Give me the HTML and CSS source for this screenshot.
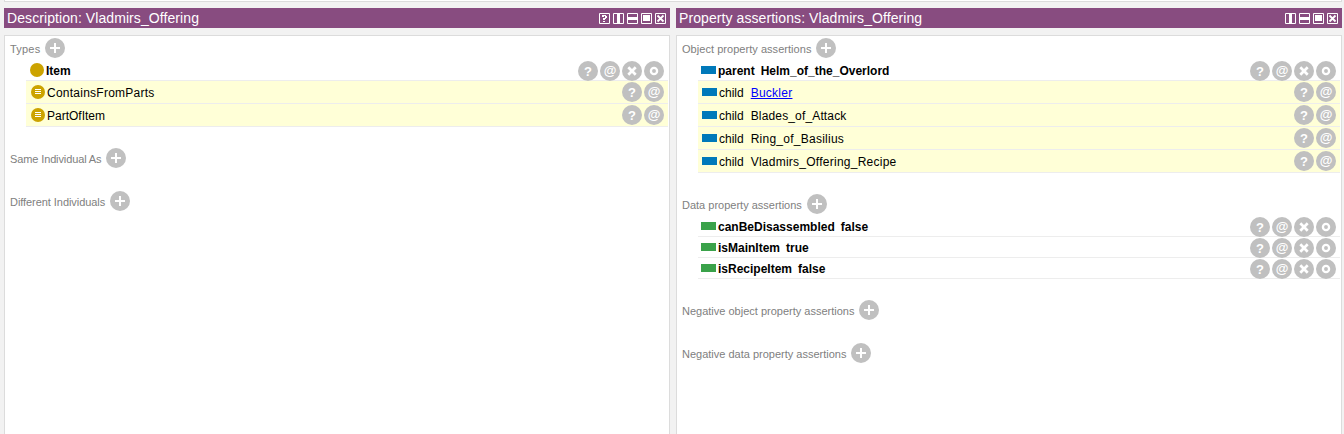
FILE: index.html
```
<!DOCTYPE html>
<html lang="en">
<head>
<meta charset="utf-8">
<title>Vladmirs_Offering</title>
<link rel="stylesheet" href="styles.css">
</head>
<body>
<svg width="0" height="0" class="defs">
  <symbol id="add" viewBox="0 0 20 20"><circle cx="10" cy="10" r="10" fill="#c0c0c0"/><path d="M5 10h10M10 5v10" stroke="#fff" stroke-width="2"/></symbol>
  <symbol id="del" viewBox="0 0 20 20"><circle cx="10" cy="10" r="10" fill="#c0c0c0"/><path d="M6.3 6.3l7.4 7.4M13.7 6.3l-7.4 7.4" stroke="#fff" stroke-width="2.7"/></symbol>
  <symbol id="edit" viewBox="0 0 20 20"><circle cx="10" cy="10" r="10" fill="#c0c0c0"/><circle cx="10" cy="10" r="3.1" fill="none" stroke="#fff" stroke-width="2.3"/></symbol>
  <symbol id="equiv" viewBox="0 0 14 14"><circle cx="7" cy="7" r="7" fill="#cca300"/><path d="M4 4.5h6M4 6.5h6M4 8.5h6" stroke="#fff" stroke-width="1"/></symbol>
  <symbol id="w-cols" viewBox="0 0 11 11"><path d="M.5.5h10v10H.5z" fill="none" stroke="#fff"/><path d="M4 0h3v11H4z" fill="#fff"/></symbol>
  <symbol id="w-rows" viewBox="0 0 11 11"><path d="M.5.5h10v10H.5z" fill="none" stroke="#fff"/><path d="M0 4h11v3H0z" fill="#fff"/></symbol>
  <symbol id="w-float" viewBox="0 0 11 11"><path d="M.5.5h10v10H.5z" fill="none" stroke="#fff"/><path d="M2 2h7v6H2z" fill="#fff"/></symbol>
  <symbol id="w-close" viewBox="0 0 11 11"><path d="M.5.5h10v10H.5z" fill="none" stroke="#fff"/><path d="M2.5 2.5l6 6M8.5 2.5l-6 6" stroke="#fff" stroke-width="1.8"/></symbol>
  <symbol id="w-help" viewBox="0 0 11 11"><path d="M.5.5h10v10H.5z" fill="none" stroke="#fff"/><path d="M3 2h4v1h1v2H7v1H6v1H4V5h2V3H5v1H3zM4 8h2v1H4z" fill="#fff"/></symbol>
</svg>
<div class="strip"></div>
<main class="panels">
  <section class="panel">
    <header class="bar"><h1 class="title">Description: Vladmirs_Offering</h1>
      <span class="tools"><svg><use href="#w-help"/></svg><svg><use href="#w-cols"/></svg><svg><use href="#w-rows"/></svg><svg><use href="#w-float"/></svg><svg><use href="#w-close"/></svg></span></header>
    <div class="body classes">
      <div class="group">
        <div class="head"><span class="w-types">Types</span><svg><use href="#add"/></svg></div>
        <div class="row"><i class="class-dot"></i><b class="w-item">Item</b><span class="acts"><i class="act">?</i><i class="act at">@</i><svg><use href="#del"/></svg><svg><use href="#edit"/></svg></span></div>
        <div class="row inferred"><svg class="equiv"><use href="#equiv"/></svg><span class="wide">ContainsFromParts</span><span class="acts"><i class="act">?</i><i class="act at">@</i></span></div>
        <div class="row inferred"><svg class="equiv"><use href="#equiv"/></svg><span>PartOfItem</span><span class="acts"><i class="act">?</i><i class="act at">@</i></span></div>
      </div>
      <div class="group"><div class="head"><span class="w-same">Same Individual As</span><svg><use href="#add"/></svg></div></div>
      <div class="group"><div class="head"><span class="w-diff">Different Individuals</span><svg><use href="#add"/></svg></div></div>
    </div>
  </section>
  <section class="panel">
    <header class="bar"><h1 class="title">Property assertions: Vladmirs_Offering</h1>
      <span class="tools"><svg><use href="#w-cols"/></svg><svg><use href="#w-rows"/></svg><svg><use href="#w-float"/></svg><svg><use href="#w-close"/></svg></span></header>
    <div class="body">
      <div class="group">
        <div class="head"><span class="w-object">Object property assertions</span><svg><use href="#add"/></svg></div>
        <div class="row"><i class="prop"></i><b class="key">parent</b><b>Helm_of_the_Overlord</b><span class="acts"><i class="act">?</i><i class="act at">@</i><svg><use href="#del"/></svg><svg><use href="#edit"/></svg></span></div>
        <div class="row inferred"><i class="prop"></i><span class="key">child</span><a class="link wide">Buckler</a><span class="acts"><i class="act">?</i><i class="act at">@</i></span></div>
        <div class="row inferred"><i class="prop"></i><span class="key">child</span><span class="medium">Blades_of_Attack</span><span class="acts"><i class="act">?</i><i class="act at">@</i></span></div>
        <div class="row inferred"><i class="prop"></i><span class="key">child</span><span class="wide">Ring_of_Basilius</span><span class="acts"><i class="act">?</i><i class="act at">@</i></span></div>
        <div class="row inferred"><i class="prop"></i><span class="key">child</span><span class="wide">Vladmirs_Offering_Recipe</span><span class="acts"><i class="act">?</i><i class="act at">@</i></span></div>
      </div>
      <div class="group">
        <div class="head"><span class="w-data">Data property assertions</span><svg><use href="#add"/></svg></div>
        <div class="row"><i class="prop data"></i><b class="key">canBeDisassembled</b><b>false</b><span class="acts"><i class="act">?</i><i class="act at">@</i><svg><use href="#del"/></svg><svg><use href="#edit"/></svg></span></div>
        <div class="row"><i class="prop data"></i><b class="key">isMainItem</b><b>true</b><span class="acts"><i class="act">?</i><i class="act at">@</i><svg><use href="#del"/></svg><svg><use href="#edit"/></svg></span></div>
        <div class="row"><i class="prop data"></i><b class="key">isRecipeItem</b><b>false</b><span class="acts"><i class="act">?</i><i class="act at">@</i><svg><use href="#del"/></svg><svg><use href="#edit"/></svg></span></div>
      </div>
      <div class="group"><div class="head"><span class="w-negobj">Negative object property assertions</span><svg><use href="#add"/></svg></div></div>
      <div class="group"><div class="head"><span class="w-negdata">Negative data property assertions</span><svg><use href="#add"/></svg></div></div>
    </div>
  </section>
</main>
</body>
</html>
```
FILE: styles.css
```
* { box-sizing: border-box; }
body { margin: 0; height: 434px; overflow: hidden; display: flex; flex-direction: column; background: #f2f2f2; font: 12px "Liberation Sans", Arial, sans-serif; color: #000; }
.defs { display: none; }
svg { display: block; flex: none; }
.strip { flex: none; height: 2px; margin: 0 2px 6px 4px; background: #fff; border: 1px solid #dcdcdc; border-top: 0; }
.panels { flex: 1; display: grid; grid-template-columns: 666px 666px; column-gap: 6px; padding-left: 4px; }
.panel { display: flex; flex-direction: column; }
.bar { height: 20px; margin-bottom: 7px; padding: 0 4px 0 3px; display: flex; align-items: center; justify-content: space-between; background: #884c80; }
.title { margin: 0; font-size: 14px; font-weight: normal; line-height: 20px; letter-spacing: 0.08px; color: #fff; white-space: nowrap; }
.tools { display: flex; gap: 3px; }
.tools svg { width: 11px; height: 11px; }
.body { flex: 1; padding: 2px 1px 0 5px; background: #fff; border: 1px solid #dcdcdc; border-bottom: 0; }
.group { margin-bottom: 21px; }
.head { height: 22px; padding-bottom: 2px; display: flex; align-items: center; color: #808080; font-size: 11px; white-space: nowrap; }
.head span { padding-top: 2px; }
.head svg { width: 20px; height: 20px; }
.w-types { width: 35px; letter-spacing: 0.2px; }
.w-same { width: 96px; letter-spacing: -0.12px; }
.w-diff { width: 100px; letter-spacing: -0.06px; }
.w-object { width: 134px; letter-spacing: 0.04px; }
.w-data { width: 125px; }
.w-negobj { width: 177px; }
.w-negdata { width: 169px; }
.row { height: 21px; margin-left: 16px; padding: 0 4px 0 3px; display: flex; align-items: center; border-bottom: 1px solid #ededed; white-space: nowrap; }
.row.inferred { height: 23px; padding-left: 4px; background: #ffffd7; }
.classes .row { padding-left: 4px; }
.classes .row.inferred { padding-left: 5px; }
.acts { margin-left: auto; display: flex; gap: 2px; }
.row:not(.inferred) .acts { margin-top: 1px; margin-bottom: -1px; }
.acts svg { width: 20px; height: 20px; }
.act { width: 20px; height: 20px; border-radius: 50%; background: #c0c0c0; color: #fff; font: bold 13px/22px "Liberation Sans", Arial, sans-serif; text-align: center; }
.act.at { font-size: 13px; line-height: 20px; }
.class-dot { width: 14px; height: 14px; margin-right: 2px; border-radius: 50%; background: #cca300; }
.equiv { width: 14px; height: 14px; margin-right: 2px; }
.prop { width: 15px; height: 8px; margin-right: 2px; background: #0079ba; }
.data { background: #3aa24a; }
.row .prop { margin-bottom: 1px; }
.key { margin-right: 6px; }
.inferred .key { margin-right: 7px; }
.wide { letter-spacing: 0.25px; }
.medium { letter-spacing: 0.15px; }
.link { color: #0000ff; text-decoration: underline; }
.row > span:not(.acts), .row > b, .link { padding-top: 1px; }
```
